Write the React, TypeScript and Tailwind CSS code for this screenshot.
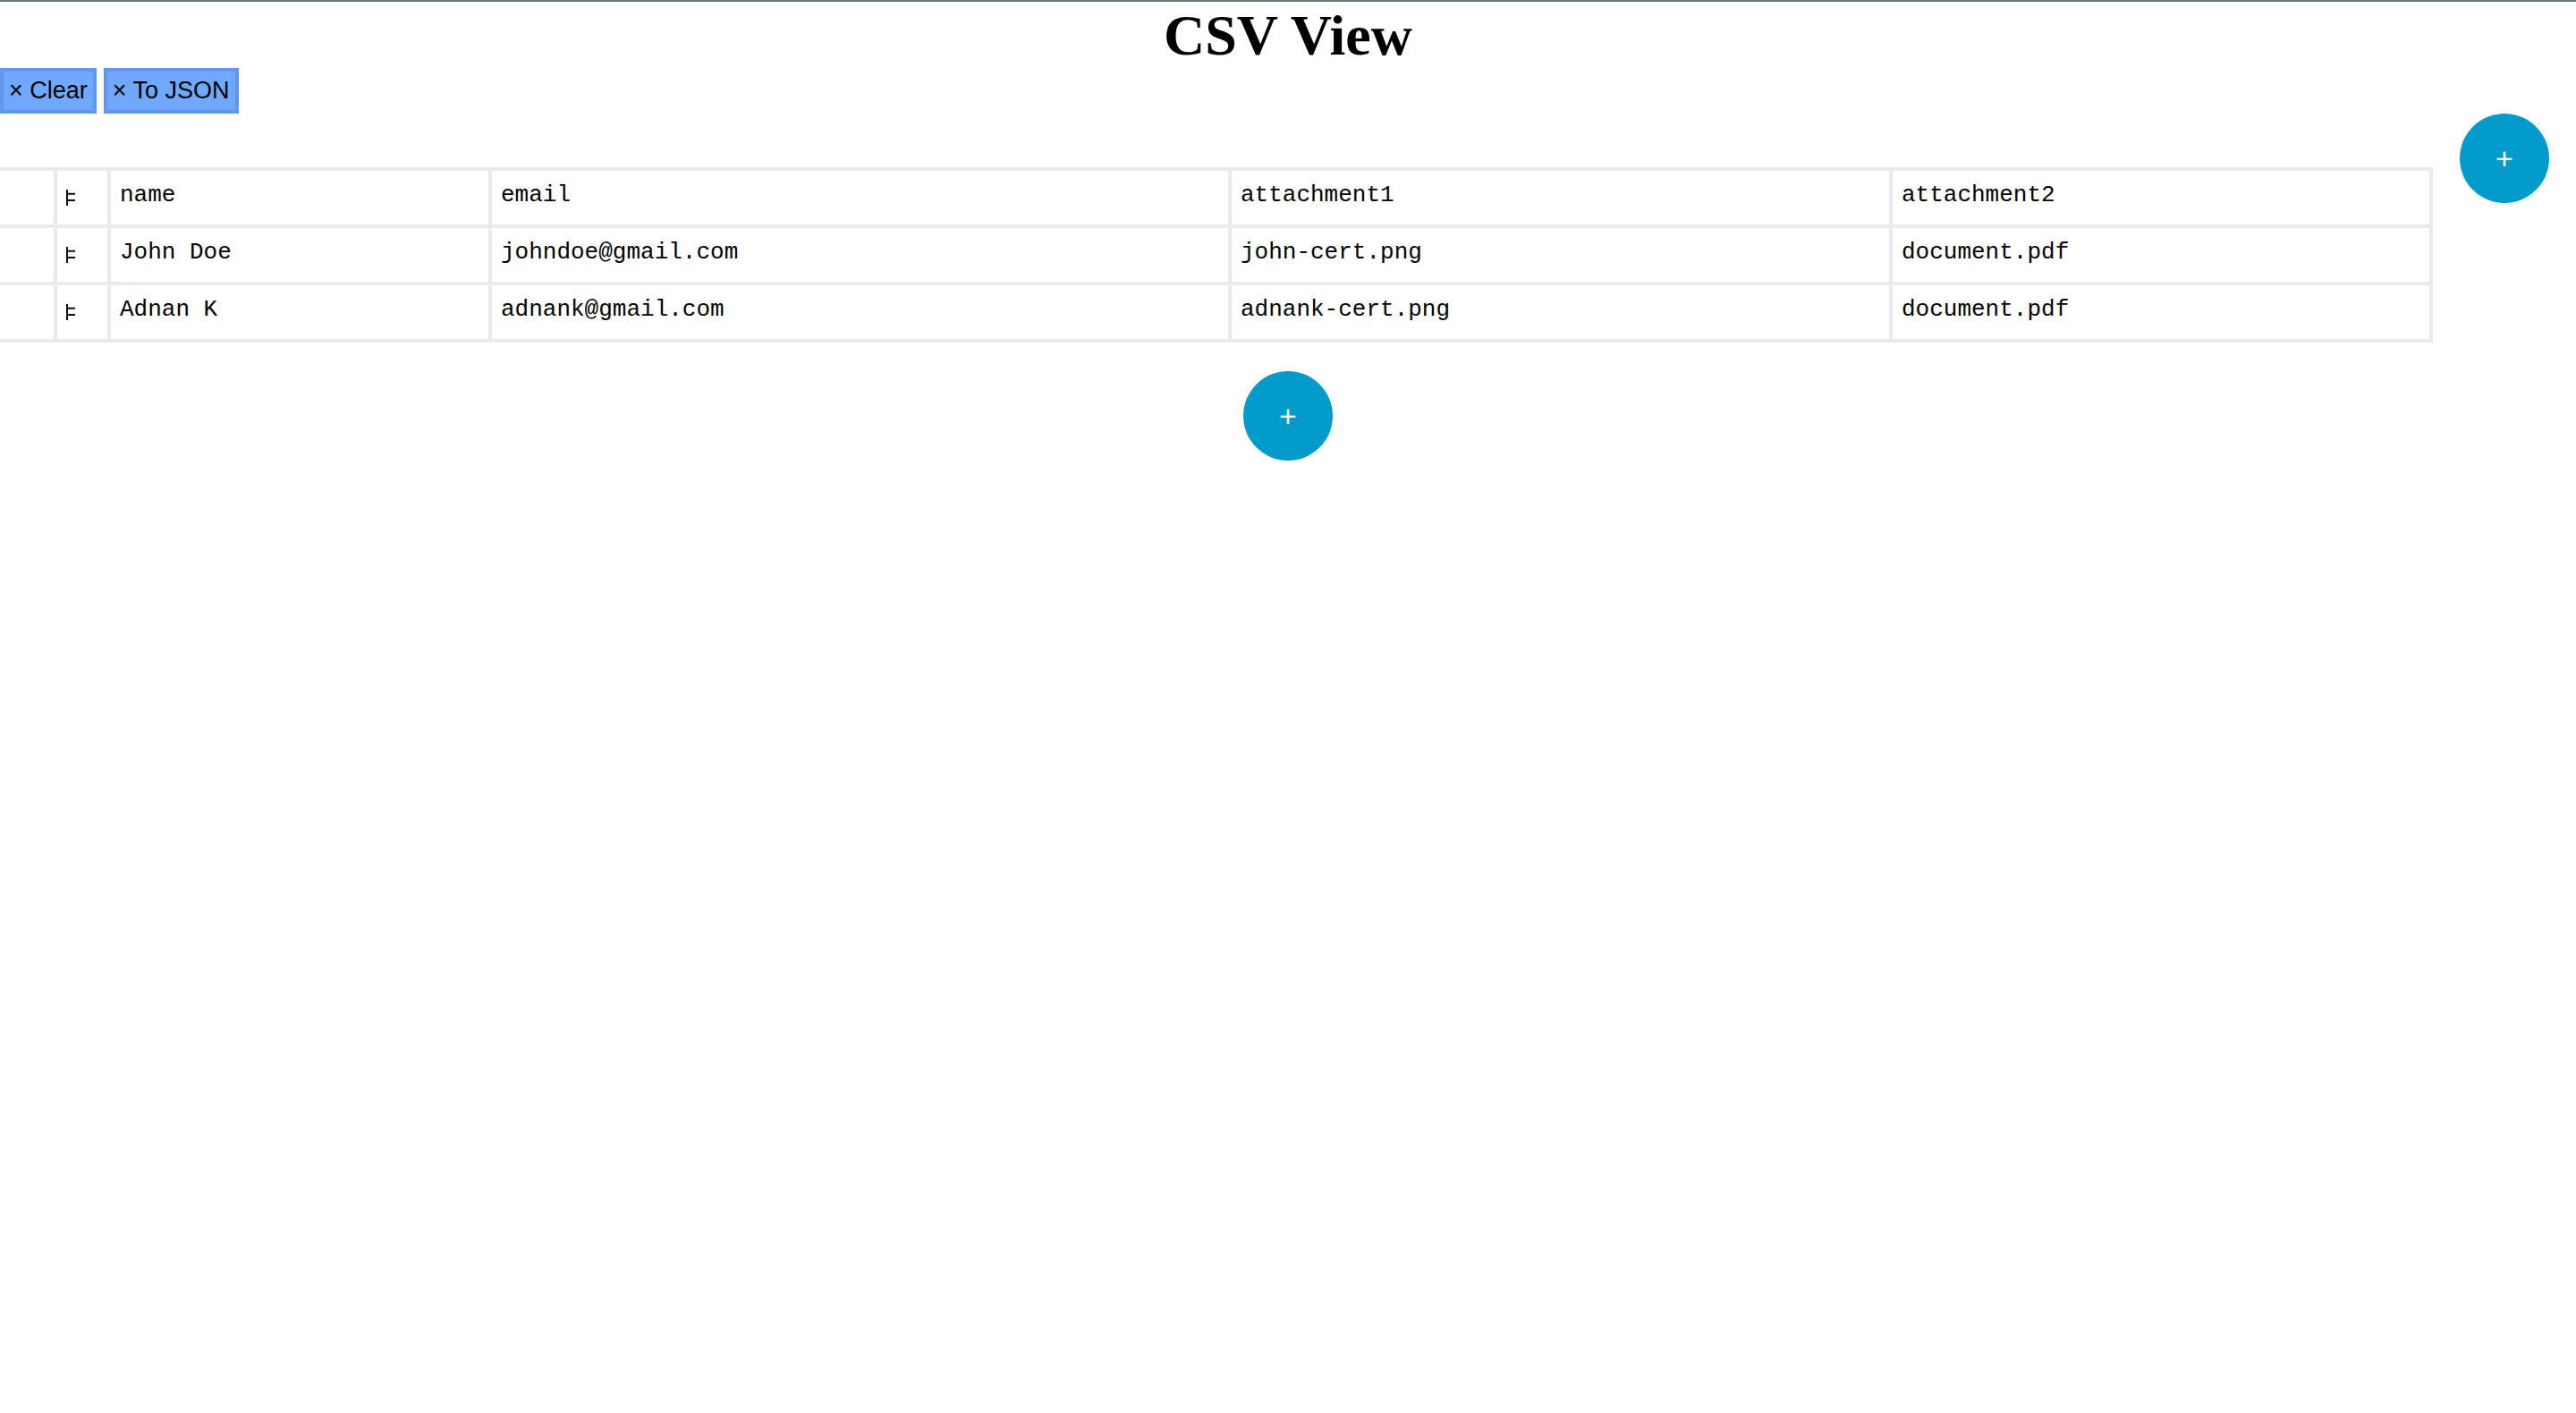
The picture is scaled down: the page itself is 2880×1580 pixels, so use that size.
import React from 'react';

const columns = ['name', 'email', 'attachment1', 'attachment2'];

const rows: string[][] = [
  ['name', 'email', 'attachment1', 'attachment2'],
  ['John Doe', 'johndoe@gmail.com', 'john-cert.png', 'document.pdf'],
  ['Adnan K', 'adnank@gmail.com', 'adnank-cert.png', 'document.pdf'],
];

const colWidths = ['w-[64px]', 'w-[60px]', 'w-[426px]', 'w-[827px]', 'w-[739px]', 'w-[604px]'];

const DragHandle = () => (
  <svg width="10" height="18" viewBox="0 0 10 18" className="block mt-[9px]">
    <path d="M1 0V18M1 4.7H10M1 12H10" stroke="#111" strokeWidth="2" fill="none" />
  </svg>
);

const AddButton: React.FC<{ className?: string }> = ({ className = '' }) => (
  <button
    className={`w-[100px] h-[100px] rounded-full bg-[#039bcc] text-white flex items-center justify-center text-[34px] leading-none font-['Liberation_Sans',Arial,sans-serif] ${className}`}
  >
    +
  </button>
);

export default function App() {
  return (
    <div className="relative min-h-screen bg-white border-t-2 border-[#6b7a80]">
      <h1 className="mt-[2px] mb-[1px] text-center font-bold text-[64px] leading-[71px] text-black font-['Liberation_Serif','Times_New_Roman',serif]">
        CSV View
      </h1>

      <div className="flex gap-2 font-['Liberation_Sans',Arial,sans-serif]">
        <button className="h-[51px] px-[6px] bg-[#70a8fe] border-4 border-[#6396ea] text-[27px] leading-none text-black">
          × Clear
        </button>
        <button className="h-[51px] px-[6px] bg-[#70a8fe] border-4 border-[#6396ea] text-[27px] leading-none text-black">
          × To JSON
        </button>
      </div>

      <AddButton className="absolute top-[125px] right-[30px]" />

      <table className="mt-[60px] table-fixed w-[2720px] border-separate border-spacing-0 font-['Liberation_Mono','Courier_New',monospace] text-[26px] text-black">
        <colgroup>
          {colWidths.map((w, i) => (
            <col key={i} className={w} />
          ))}
        </colgroup>
        <tbody>
          {rows.map((row, r) => {
            const top = r === 0 ? 'border-t-4' : '';
            return (
              <tr key={r}>
                <td className={`align-top border-r-4 border-b-4 border-[#e9eaee] ${top} pt-[12px] pb-[18px] leading-[30px]`} />
                <td className={`align-top border-r-4 border-b-4 border-[#e9eaee] ${top} pt-[12px] pb-[18px] px-[10px] leading-[30px]`}>
                  <DragHandle />
                </td>
                {row.map((cell, c) => (
                  <td
                    key={columns[c]}
                    className={`align-top border-r-4 border-b-4 border-[#e9eaee] ${top} pt-[12px] pb-[18px] px-[10px] leading-[30px] whitespace-nowrap`}
                  >
                    {cell}
                  </td>
                ))}
              </tr>
            );
          })}
        </tbody>
      </table>

      <div className="flex justify-center mt-[32px]">
        <AddButton />
      </div>
    </div>
  );
}
